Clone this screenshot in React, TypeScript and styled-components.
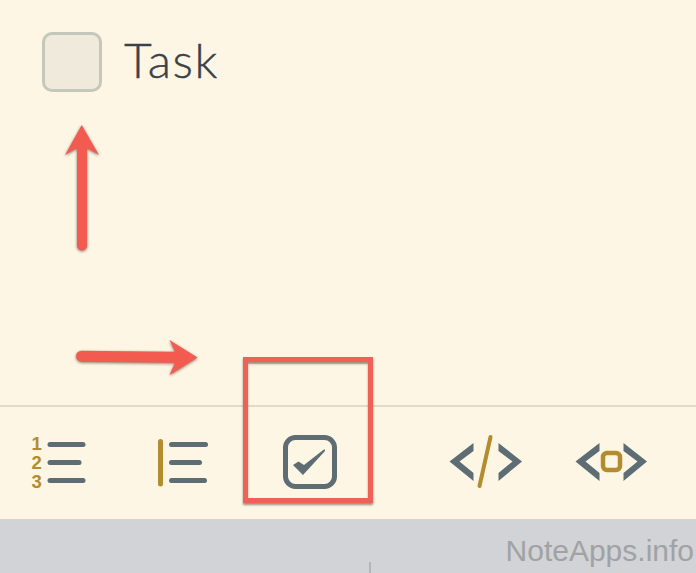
import { createGlobalStyle, styled } from "styled-components";

const SLATE = "#5d6d73";
const GOLD = "#b48c30";
const RED = "#f45b50";

const GlobalStyle = createGlobalStyle`
  html, body {
    margin: 0;
    padding: 0;
    background: #fef6e4;
  }
`;

const Page = styled.div`
  position: relative;
  width: 696px;
  height: 573px;
  overflow: hidden;
  display: flex;
  flex-direction: column;
  background: #fef6e4;
`;

const Editor = styled.main`
  flex: none;
  height: 405px;
  box-sizing: border-box;
  padding: 32px 42px;
`;

const TaskRow = styled.div`
  display: flex;
  align-items: center;
  gap: 22px;
`;

const TaskBox = styled.span`
  flex: none;
  width: 60px;
  height: 60px;
  box-sizing: border-box;
  border: 3px solid #c6c7bb;
  border-radius: 10px;
  background: #f0eadc;
`;

const TaskLabel = styled.span`
  font-family: "Lato", "Noto Sans", sans-serif;
  font-weight: 300;
  font-size: 48px;
  line-height: 56px;
  letter-spacing: 1.6px;
  padding-bottom: 4px;
  color: #394248;
  -webkit-text-stroke: 0.4px #394248;
`;

const Toolbar = styled.nav`
  flex: none;
  height: 114px;
  box-sizing: border-box;
  border-top: 2px solid #e1dac8;
  padding: 25px 44px 0 28px;
  display: flex;
  justify-content: space-between;
  align-items: flex-start;
`;

const ToolGroup = styled.div<{ $gap: number }>`
  display: flex;
  gap: ${(p) => p.$gap}px;
`;

const ToolIcon = styled.svg<{ $wide?: boolean }>`
  display: block;
  width: ${(p) => (p.$wide ? 80 : 64)}px;
  height: 60px;
`;

const Numeral = styled.text`
  font-family: "Liberation Sans", Arial, sans-serif;
  font-weight: 700;
  font-size: 18.5px;
  fill: ${GOLD};
`;

const Keyboard = styled.footer`
  flex: 1;
  display: flex;
  align-items: flex-end;
  background: #d1d3d6;
`;

const Tick = styled.span`
  width: 2px;
  height: 11px;
  margin-left: 369px;
  background: #b4b5b8;
`;

const Watermark = styled.span`
  margin-left: auto;
  margin-right: 2px;
  font-family: "Liberation Sans", Arial, sans-serif;
  font-size: 30px;
  line-height: 44px;
  color: #a1a2a5;
`;

const Highlight = styled.div`
  position: absolute;
  left: 243px;
  top: 357px;
  width: 130px;
  height: 146px;
  box-sizing: border-box;
  border: 5px solid #ef6156;
  box-shadow: 0 2px 2px rgba(60, 40, 30, 0.5), inset 0 2px 2px rgba(60, 40, 30, 0.5);
`;

const Arrow = styled.svg`
  position: absolute;
  overflow: visible;
  filter: drop-shadow(0 1.5px 1.5px rgba(60, 30, 20, 0.6));
`;

const UpArrow = styled(Arrow)`
  left: 60px;
  top: 120px;
  width: 44px;
  height: 135px;
`;

const RightArrow = styled(Arrow)`
  left: 72px;
  top: 335px;
  width: 130px;
  height: 45px;
`;

const Bars = ({ x, ends }: { x: number; ends: number[] }) => (
  <g stroke={SLATE} strokeWidth="5" strokeLinecap="round">
    {ends.map((end, i) => (
      <line key={i} x1={x} x2={end} y1={12.5 + i * 18} y2={12.5 + i * 18} />
    ))}
  </g>
);

const Chevrons = ({ left, right }: { left: number; right: number }) => (
  <g fill={SLATE}>
    <polygon points={`${left + 24},11 ${left},29.5 ${left + 24},49 ${left + 24},41 ${left + 10},29.5 ${left + 24},19`} />
    <polygon points={`${right},11 ${right + 23.5},29.5 ${right},49 ${right},41 ${right + 14},29.5 ${right},19`} />
  </g>
);

const App = () => {
  return (
    <Page>
      <GlobalStyle />
      <Editor>
        <TaskRow>
          <TaskBox />
          <TaskLabel>Task</TaskLabel>
        </TaskRow>
      </Editor>

      <Toolbar>
        <ToolGroup $gap={62}>
          <ToolIcon viewBox="0 0 64 60">
            <Numeral x="3.5" y="18">1</Numeral>
            <Numeral x="3.5" y="36.5">2</Numeral>
            <Numeral x="3.5" y="55.5">3</Numeral>
            <Bars x={22} ends={[55, 51, 55]} />
          </ToolIcon>
          <ToolIcon viewBox="0 0 64 60">
            <line x1="6.5" x2="6.5" y1="9.5" y2="52" stroke={GOLD} strokeWidth="5" strokeLinecap="round" />
            <Bars x={17.5} ends={[51.5, 45.5, 50.5]} />
          </ToolIcon>
          <ToolIcon viewBox="0 0 64 60">
            <rect x="5.5" y="5.5" width="49" height="49" rx="10" fill="none" stroke={SLATE} strokeWidth="5" />
            <polygon points="13,33 18.5,29.5 24,33 44.5,17 45,19 23,43" fill={SLATE} />
          </ToolIcon>
        </ToolGroup>
        <ToolGroup $gap={46}>
          <ToolIcon $wide viewBox="0 0 80 60">
            <Chevrons left={3.5} right={52.5} />
            <line x1="44.5" y1="5" x2="33.5" y2="54" stroke={GOLD} strokeWidth="4" strokeLinecap="round" />
          </ToolIcon>
          <ToolIcon $wide viewBox="0 0 80 60">
            <Chevrons left={3.5} right={51.5} />
            <rect x="31" y="21" width="17" height="17" rx="4" fill="none" stroke={GOLD} strokeWidth="4.5" />
          </ToolIcon>
        </ToolGroup>
      </Toolbar>

      <Keyboard>
        <Tick />
        <Watermark>NoteApps.info</Watermark>
      </Keyboard>

      <UpArrow viewBox="0 0 44 135">
        <path
          d="M21.7 5 L39 35 L27 28 L27 125.5 A5 5 0 0 1 17 125.5 L17 28 L5 35 Z"
          fill={RED}
        />
      </UpArrow>
      <RightArrow viewBox="0 0 130 45">
        <path
          d="M125.5 22.5 L97.5 40 L103 27.8 L9.5 26.7 A5.5 5.5 0 0 1 9.5 15.7 L103 16.8 L97.5 5 Z"
          fill={RED}
        />
      </RightArrow>
      <Highlight />
    </Page>
  );
};

export default App;
